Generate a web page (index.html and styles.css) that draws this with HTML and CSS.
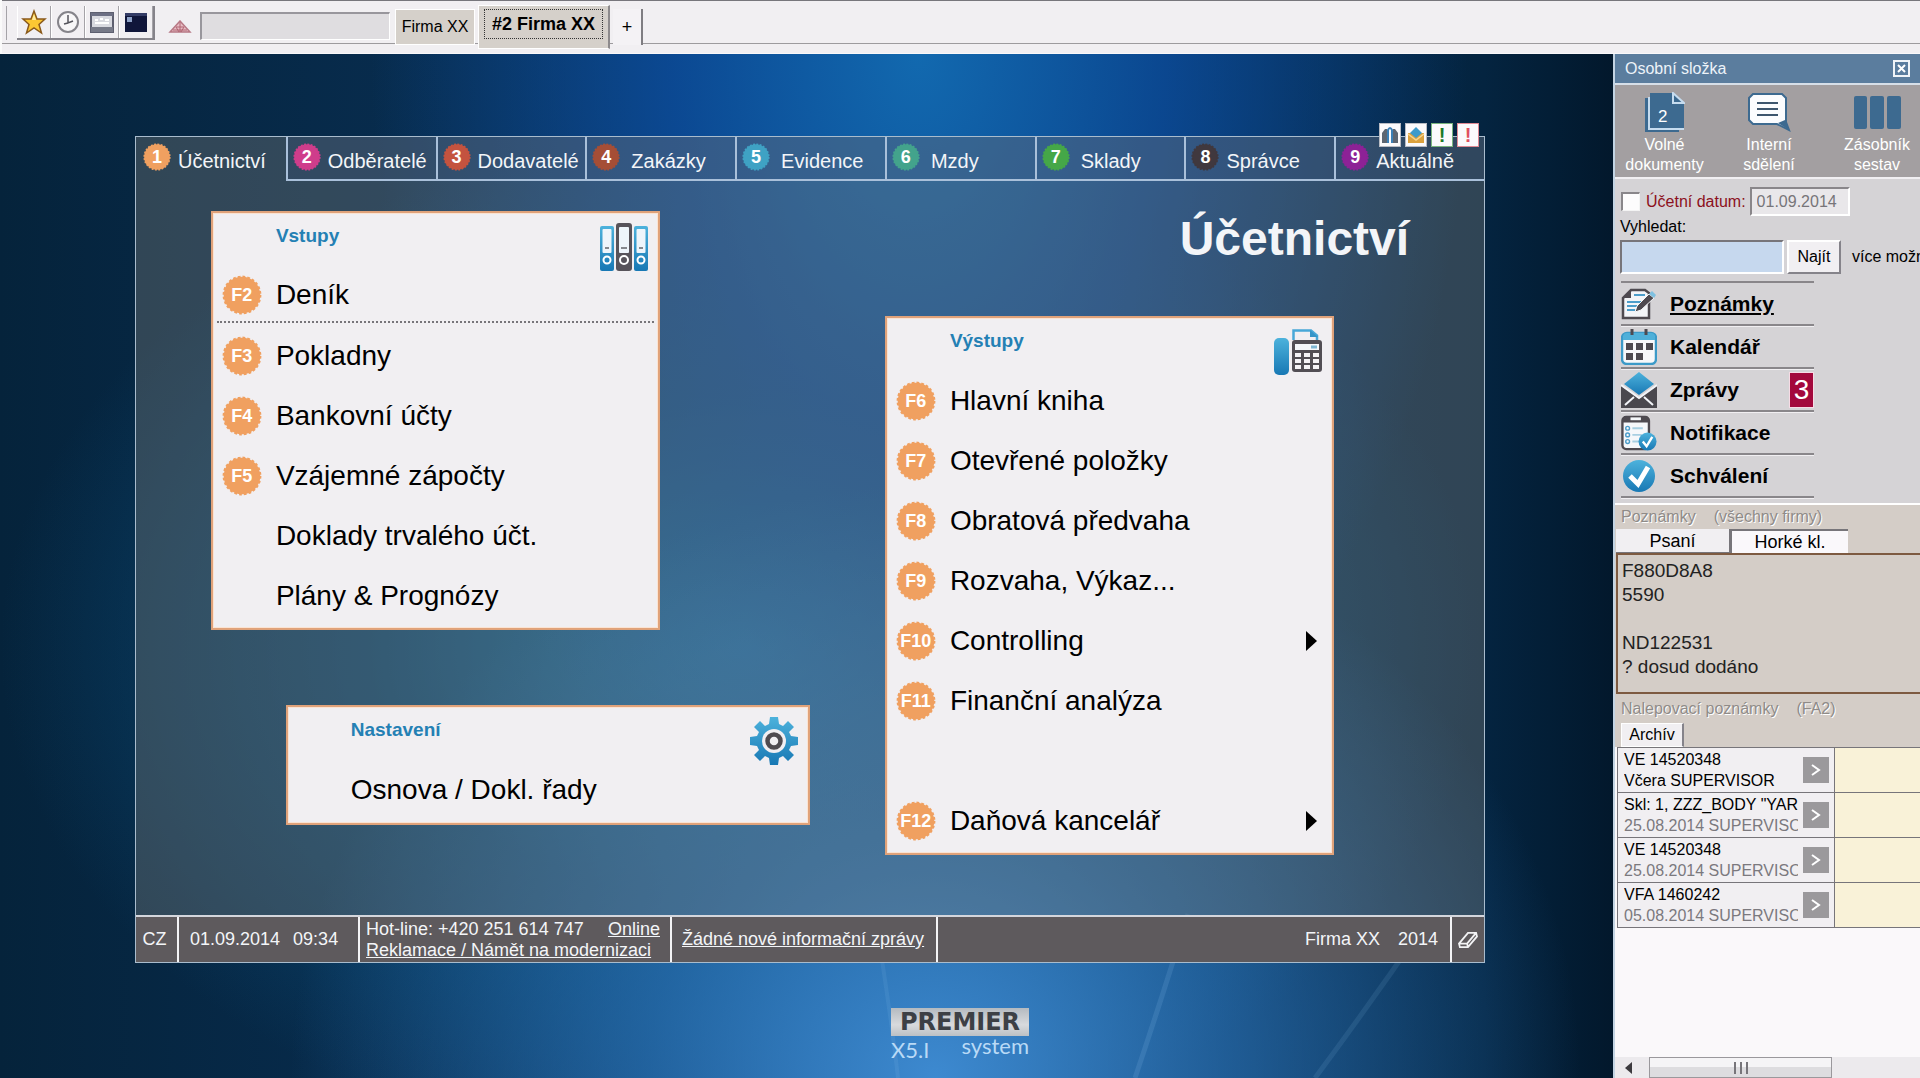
FILE: index.html
```html
<!DOCTYPE html>
<html lang="cs">
<head>
<meta charset="utf-8">
<title>PREMIER system – Účetnictví</title>
<link rel="stylesheet" href="styles.css">
</head>
<body>
<svg class="defs" aria-hidden="true">
  <defs>
    <linearGradient id="blue" x1="0" y1="0" x2="0" y2="1"><stop offset="0" stop-color="#4db2dc"/><stop offset="1" stop-color="#1878b4"/></linearGradient>
    <symbol id="seal" viewBox="0 0 40 40"><circle cx="20" cy="20" r="18.300" fill="currentColor"/><circle cx="20" cy="20" r="18" fill="none" stroke="currentColor" stroke-width="2.800" stroke-dasharray="2.700 2.012"/></symbol>
  </defs>
</svg>

<header class="toolbar">
  <div class="tools">
    <button class="tool" aria-label="Oblíbené"><svg width="26" height="26" viewBox="0 0 26 26"><path d="M13 2l3 8h8l-6 5.500 2.500 8.500-7.500-5-7.500 5 2.500-8.500-6-5.500h8z" fill="#fbc733" stroke="#8a5a1c" stroke-width="1.500"/><path d="M13 5l2 6h-4z" fill="#ffeaa0"/></svg></button>
    <button class="tool" aria-label="Historie"><svg width="24" height="24" viewBox="0 0 24 24"><circle cx="12" cy="12" r="10" fill="#f8f7f8" stroke="#85848a" stroke-width="2"/><path d="M12 5v8l5-2M12 13l-4 1" fill="none" stroke="#55555c" stroke-width="1.500"/></svg></button>
    <button class="tool" aria-label="Okno"><svg width="24" height="24" viewBox="0 0 24 24"><rect x="1" y="3" width="22" height="19" fill="#d9dae0" stroke="#5e6070" stroke-width="2"/><rect x="1" y="3" width="22" height="3" fill="#6d7084"/><path d="M5 10h3M10 9h3M15 10h4M5 13h14" stroke="#fff" stroke-width="2"/><rect x="1" y="17" width="22" height="5" fill="#777a88"/></svg></button>
    <button class="tool" aria-label="Terminál"><svg width="24" height="24" viewBox="0 0 24 24"><rect x="1" y="3" width="22" height="19" fill="#10163a"/><path d="M1 3h22v3H1z" fill="#343c66"/><rect x="3" y="7" width="5" height="5" fill="#8ea2c8"/></svg></button>
  </div>
  <svg class="pyramid" width="24" height="14" viewBox="0 0 24 14"><path d="M12 1l10 11H2z" fill="#e7bcc4" stroke="#b77885" stroke-width="1.500"/><path d="M8 7h8M5 10h14M12 2v10M8 7l3 5M16 7l-3 5" stroke="#b06573" stroke-width="1"/></svg>
  <input class="command" type="text" aria-label="Příkaz">
  <nav class="firms">
    <button class="firm">Firma XX</button>
    <button class="firm firm-active"><span>#2 Firma XX</span></button>
    <button class="firm firm-add">+</button>
  </nav>
</header>

<div class="desk">
<main class="workspace">
  <svg class="rays" viewBox="0 0 1613 1024" preserveAspectRatio="none" aria-hidden="true">
    <g fill="none" stroke="#9fd0f5"><path d="M1135 1024Q1160 950 1188 860" stroke-width="5" opacity=".14"/><path d="M1315 1024Q1370 950 1425 870" stroke-width="5" opacity=".11"/><path d="M898 1024Q892 970 878 880" stroke-width="4" opacity=".1"/></g>
  </svg>

  <section class="frame">
    <div class="alerts">
      <button class="alert" aria-label="Hledat"><svg width="18" height="18" viewBox="0 0 18 18"><path d="M1 17V7l3-4h2v14zM17 17V7l-3-4h-2v14z" fill="#5d6672"/><path d="M7 17V4q2-4 4 0v13" fill="none" stroke="#3b7fb6" stroke-width="2"/></svg></button>
      <button class="alert" aria-label="Pošta"><svg width="18" height="18" viewBox="0 0 18 18"><path d="M1 7h16v10H1z" fill="#dba13d"/><path d="M9 1l6 6-6 5-6-5z" fill="#3d9aca"/><path d="M1 8l8 6 8-6" fill="none" stroke="#f6d48f" stroke-width="1.500"/></svg></button>
      <button class="alert alert-green">!</button>
      <button class="alert alert-red">!</button>
    </div>
    <nav class="modules">
      <a href="#" class="module current"><span class="num n1"><svg><use href="#seal"/></svg><b>1</b></span><span class="name">Účetnictví</span></a>
      <a href="#" class="module"><span class="num n2"><svg><use href="#seal"/></svg><b>2</b></span><span class="name">Odběratelé</span></a>
      <a href="#" class="module"><span class="num n3"><svg><use href="#seal"/></svg><b>3</b></span><span class="name">Dodavatelé</span></a>
      <a href="#" class="module wide"><span class="num n4"><svg><use href="#seal"/></svg><b>4</b></span><span class="name">Zakázky</span></a>
      <a href="#" class="module wide"><span class="num n5"><svg><use href="#seal"/></svg><b>5</b></span><span class="name">Evidence</span></a>
      <a href="#" class="module wide"><span class="num n6"><svg><use href="#seal"/></svg><b>6</b></span><span class="name">Mzdy</span></a>
      <a href="#" class="module wide"><span class="num n7"><svg><use href="#seal"/></svg><b>7</b></span><span class="name">Sklady</span></a>
      <a href="#" class="module"><span class="num n8"><svg><use href="#seal"/></svg><b>8</b></span><span class="name">Správce</span></a>
      <a href="#" class="module"><span class="num n9"><svg><use href="#seal"/></svg><b>9</b></span><span class="name">Aktuálně</span></a>
    </nav>

    <div class="board">
      <h1 class="title">Účetnictví</h1>

      <section class="card inputs">
        <header class="card-head"><h2>Vstupy</h2>
          <svg width="48" height="48" viewBox="0 0 48 48"><g fill="url(#blue)"><rect x="0" y="3" width="14" height="45" rx="2"/><rect x="34" y="3" width="14" height="45" rx="2"/></g><rect x="16" y="0" width="16" height="48" rx="3" fill="#57535a"/><g fill="#eef5fb"><rect x="2.500" y="6" width="9" height="24" rx="1"/><rect x="36.500" y="6" width="9" height="24" rx="1"/><rect x="19" y="4" width="10" height="26" rx="1"/></g><path d="M5 25h4M39 25h4M21 25h6" stroke="#85888e" stroke-width="2"/><g fill="none" stroke="#fff" stroke-width="2"><circle cx="7" cy="37" r="3.500"/><circle cx="41" cy="37" r="3.500"/><circle cx="24" cy="37" r="4"/></g></svg>
        </header>
        <ul class="menu">
          <li class="ruled"><a href="#"><span class="key"><svg><use href="#seal"/></svg><b>F2</b></span>Deník</a></li>
          <li><a href="#"><span class="key"><svg><use href="#seal"/></svg><b>F3</b></span>Pokladny</a></li>
          <li><a href="#"><span class="key"><svg><use href="#seal"/></svg><b>F4</b></span>Bankovní účty</a></li>
          <li><a href="#"><span class="key"><svg><use href="#seal"/></svg><b>F5</b></span>Vzájemné zápočty</a></li>
          <li><a href="#"><span class="key"></span>Doklady trvalého účt.</a></li>
          <li><a href="#"><span class="key"></span>Plány &amp; Prognózy</a></li>
        </ul>
      </section>

      <section class="card settings">
        <header class="card-head"><h2>Nastavení</h2>
          <svg width="48" height="48" viewBox="-24 -24 48 48"><path fill="url(#blue)" d="M-4-24h8l1 7 4 2 5-5 6 6-5 5 2 4 7 1v8l-7 1-2 4 5 5-6 6-5-5-4 2-1 7h-8l-1-7-4-2-5 5-6-6 5-5-2-4-7-1v-8l7-1 2-4-5-5 6-6 5 5 4-2z"/><circle r="12" fill="#f1eff2"/><circle r="6.500" fill="none" stroke="#4f4b50" stroke-width="4.500"/></svg>
        </header>
        <ul class="menu">
          <li><a href="#"><span class="key"></span>Osnova / Dokl. řady</a></li>
        </ul>
      </section>

      <section class="card outputs">
        <header class="card-head"><h2>Výstupy</h2>
          <svg width="48" height="48" viewBox="0 0 48 48"><rect x="0" y="10" width="15" height="37" rx="5" fill="url(#blue)"/><path d="M19.500 12V2.500H37l6 5V12" fill="none" stroke="#48a8d8" stroke-width="2.500"/><path d="M36 2v7h8z" fill="#3595c8"/><rect x="18" y="12" width="30" height="32" rx="3" fill="#524e54"/><rect x="21" y="16" width="24" height="6" fill="#f5f7fa"/><path d="M37 19h6" stroke="#7fb6d2" stroke-width="3"/><path fill="#f5f3f6" d="M21 25h6v4h-6zM30 25h6v4h-6zM39 25h6v4h-6zM21 31h6v4h-6zM30 31h6v4h-6zM39 31h6v4h-6zM21 37h6v4h-6zM30 37h6v4h-6zM39 37h6v4h-6z"/></svg>
        </header>
        <ul class="menu">
          <li><a href="#"><span class="key"><svg><use href="#seal"/></svg><b>F6</b></span>Hlavní kniha</a></li>
          <li><a href="#"><span class="key"><svg><use href="#seal"/></svg><b>F7</b></span>Otevřené položky</a></li>
          <li><a href="#"><span class="key"><svg><use href="#seal"/></svg><b>F8</b></span>Obratová předvaha</a></li>
          <li><a href="#"><span class="key"><svg><use href="#seal"/></svg><b>F9</b></span>Rozvaha, Výkaz...</a></li>
          <li><a href="#" class="more"><span class="key"><svg><use href="#seal"/></svg><b>F10</b></span>Controlling</a></li>
          <li><a href="#"><span class="key"><svg><use href="#seal"/></svg><b>F11</b></span>Finanční analýza</a></li>
          <li class="apart"><a href="#" class="more"><span class="key"><svg><use href="#seal"/></svg><b>F12</b></span>Daňová kancelář</a></li>
        </ul>
      </section>
    </div>

    <footer class="status">
      <div class="cell lang">CZ</div>
      <div class="cell clock"><span>01.09.2014</span><span>09:34</span></div>
      <div class="cell contact"><div class="line"><span>Hot-line: +420 251 614 747</span><a href="#">Online</a></div><a href="#">Reklamace / Námět na modernizaci</a></div>
      <div class="cell news"><a href="#">Žádné nové informační zprávy</a></div>
      <div class="cell company"><span>Firma XX</span><span>2014</span></div>
      <button class="cell eraser" aria-label="Vymazat"><svg width="22" height="18" viewBox="0 0 24 20"><path d="M2 14L12 2h9l1 4-10 12H3zM2 14h9l10-12M11 14l1 4" fill="none" stroke="#f2f2f4" stroke-width="2"/></svg></button>
    </footer>
  </section>

  <div class="brand">
    <div class="plate">PREMIER</div>
    <div class="brand-row"><span class="version">X5.I</span><span class="system">system</span></div>
  </div>
</main>

<aside class="side">
  <div class="side-title"><span>Osobní složka</span><button class="close" aria-label="Zavřít"><svg width="17" height="17" viewBox="0 0 17 17"><rect x="1" y="1" width="15" height="15" fill="none" stroke="#f0f4f8" stroke-width="2"/><path d="M5 5l7 7M12 5l-7 7" stroke="#fff" stroke-width="2"/></svg></button></div>
  <div class="shortcuts">
    <button class="shortcut"><svg width="40" height="40" viewBox="0 0 40 40"><path d="M0 6h8v32h26v2H0z" fill="#3d6a90"/><path d="M5 1h22l12 11v24H5z" fill="#3d6a90"/><path d="M4 5v32h35" fill="none" stroke="#c6dcef" stroke-width="2"/><path d="M28 1v10h11z" fill="#3d6a90" stroke="#c6dcef" stroke-width="2"/><text x="13" y="30" class="doc-count">2</text></svg>Volné<br>dokumenty</button>
    <button class="shortcut"><svg width="44" height="40" viewBox="0 0 44 40"><path d="M6 2h29l4 4v24l3 8-12-6H6l-4-4V6z" fill="#fbfcfe" stroke="#3d6a90" stroke-width="2"/><path d="M31 31l11 7-4-10z" fill="#3d6a90"/><path d="M10 11h21M10 17h21M10 23h21" stroke="#3d566e" stroke-width="2"/></svg>Interní<br>sdělení</button>
    <button class="shortcut"><svg width="48" height="40" viewBox="0 0 48 40"><g fill="#3d6a90"><rect x="1" y="4" width="13" height="33" rx="2"/><rect x="17" y="4" width="14" height="33" rx="2"/><rect x="34" y="4" width="14" height="33" rx="2"/></g></svg>Zásobník<br>sestav</button>
  </div>

  <form class="search">
    <div class="date-row"><input type="checkbox" id="acc"><label for="acc">Účetní datum:</label><input class="date" type="text" value="01.09.2014" aria-label="Datum"></div>
    <label for="find">Vyhledat:</label>
    <div class="find-row"><input class="find" id="find" type="text"><button type="button" class="find-btn">Najít</button><span>více možností</span></div>
  </form>

  <ul class="folders">
    <li><a href="#"><svg width="36" height="36" viewBox="0 0 36 36"><path d="M10 4h14l4 3v25H2V12z" fill="#f3f5f8" stroke="#4e4a50" stroke-width="2.500"/><path d="M2 12l8-8v8z" fill="#4e4a50"/><path d="M13 9h11M6 16h14M6 20h11M6 24h8" stroke="#4c9dca" stroke-width="2"/><path d="M14 26l2-6 12-12 5 4-13 12z" fill="#4e4a50" stroke="#f3f5f8"/><path d="M28 8l3-3 4 4-2 3z" fill="#7fc0e0"/></svg><u>Poznámky</u></a></li>
    <li><a href="#"><svg width="36" height="36" viewBox="0 0 36 36"><rect x="1" y="4" width="34" height="31" rx="5" fill="#f7f8fa" stroke="#3c9ac8" stroke-width="2.500"/><path d="M2 11V8q0-4 4-4h24q4 0 4 4v3z" fill="#4fb0d9"/><path d="M11 0v6M25 0v6" stroke="#4e4a50" stroke-width="3"/><path d="M5 14h7v7H5zM15 14h7v7h-7zM25 14h7v7h-7zM5 24h7v7H5zM15 24h7v7h-7z" fill="#4e4a50"/></svg>Kalendář</a></li>
    <li><a href="#"><svg width="36" height="36" viewBox="0 0 36 36"><path d="M0 14v22h36V14L18 26z" fill="#4a484e"/><path d="M18 0l15 12-15 11L3 12z" fill="url(#blue)"/><path d="M4 33l9-8M32 33l-9-8M0 13l18 13 18-13" fill="none" stroke="#f2f4f8" stroke-width="2"/></svg>Zprávy</a><span class="count">3</span></li>
    <li><a href="#"><svg width="38" height="38" viewBox="0 0 38 38"><rect x="1.500" y="2" width="28" height="34" rx="4" fill="#f5f7fa" stroke="#4e4a50" stroke-width="2.500"/><path d="M2 8V5q0-4 4-4h19q4 0 4 4v3z" fill="#4e4a50"/><path d="M10 4h11" stroke="#f5f7fa" stroke-width="3"/><path d="M12 14h11M12 21h10M12 28h7" stroke="#a8cfe2" stroke-width="2"/><g fill="none" stroke="#4c9dca" stroke-width="1.500"><circle cx="7" cy="14" r="2"/><circle cx="7" cy="21" r="2"/><circle cx="7" cy="28" r="2"/></g><circle cx="28" cy="28" r="9.500" fill="url(#blue)"/><path d="M23 28l4 5 6-10" fill="none" stroke="#fff" stroke-width="2.500"/></svg>Notifikace</a></li>
    <li><a href="#"><svg width="36" height="36" viewBox="0 0 36 36"><circle cx="18" cy="18" r="16" fill="url(#blue)"/><path d="M9 18l8 8 10-17" fill="none" stroke="#fff" stroke-width="5"/></svg>Schválení</a></li>
  </ul>

  <section class="notes">
    <h3><span>Poznámky</span><span>(všechny firmy)</span></h3>
    <div class="note-tabs"><button class="note-tab">Psaní</button><button class="note-tab pressed">Horké kl.</button></div>
    <div class="note-text">F880D8A8<br>5590<br><br>ND122531<br>? dosud dodáno</div>
  </section>

  <section class="stickers">
    <h3><span>Nalepovací poznámky</span><span>(FA2)</span></h3>
    <button class="archive">Archív</button>
    <table>
      <tr><td><div class="sticker"><p>VE 14520348<br>Včera SUPERVISOR</p><button aria-label="Otevřít"><svg width="10" height="14" viewBox="0 0 10 14"><path d="M1 2l7 5-7 5" fill="none" stroke="#fff" stroke-width="2"/></svg></button></div></td><td class="yellow"></td></tr>
      <tr><td><div class="sticker"><p>Skl: 1, ZZZ_BODY "YAR<br><span>25.08.2014 SUPERVISOR</span></p><button aria-label="Otevřít"><svg width="10" height="14" viewBox="0 0 10 14"><path d="M1 2l7 5-7 5" fill="none" stroke="#fff" stroke-width="2"/></svg></button></div></td><td class="yellow"></td></tr>
      <tr><td><div class="sticker"><p>VE 14520348<br><span>25.08.2014 SUPERVISOR</span></p><button aria-label="Otevřít"><svg width="10" height="14" viewBox="0 0 10 14"><path d="M1 2l7 5-7 5" fill="none" stroke="#fff" stroke-width="2"/></svg></button></div></td><td class="yellow"></td></tr>
      <tr><td><div class="sticker"><p>VFA 1460242<br><span>05.08.2014 SUPERVISOR</span></p><button aria-label="Otevřít"><svg width="10" height="14" viewBox="0 0 10 14"><path d="M1 2l7 5-7 5" fill="none" stroke="#fff" stroke-width="2"/></svg></button></div></td><td class="yellow"></td></tr>
    </table>
  </section>
  <div class="scroll"><svg width="8" height="12" viewBox="0 0 8 12"><path d="M7 0v12L0 6z" fill="#3c3a3e"/></svg><div class="thumb"><i></i><i></i><i></i></div></div>
</aside>
</div>
</body>
</html>
```
FILE: styles.css
```css
* { box-sizing: border-box; }
html, body { height: 100%; }
body { margin: 0; display: flex; flex-direction: column; overflow: hidden; font-family: "Liberation Sans", Arial, sans-serif; font-size: 16px; color: #000; }
button, input { font: inherit; color: inherit; margin: 0; padding: 0; border: 0; border-radius: 0; background: none; }
ul { list-style: none; margin: 0; padding: 0; }
h1, h2, h3, p { margin: 0; font-weight: normal; }
a { color: inherit; text-decoration: none; }
svg { display: block; flex: none; }
.defs { position: absolute; width: 0; height: 0; }

/* top toolbar */
.toolbar { flex: none; height: 54px; display: flex; align-items: flex-start; background: linear-gradient(#77767c 0 1px, #f1eff2 1px 43px, #9d9b9e 43px 44px, #f1eff2 44px); padding-left: 6px; border-left: 2px solid #fafafa; box-shadow: inset 0 -1px 0 #f9f8fa; }
.tools, .pyramid, .command, .firms { flex: none; }
.tools { display: flex; margin: 6px 0 0 9px; border-right: 2px solid #85838a; border-bottom: 2px solid #85838a; box-shadow: -10px 0 0 #f1eff2, -11px 0 0 #a5a3a8; }
.tool { width: 34px; height: 32px; display: grid; place-items: center; border-right: 1px solid #a5a3a8; border-left: 1px solid #fff; }
.pyramid { margin: 20px 0 0 13px; }
.command { width: 190px; height: 28px; margin: 12px 0 0 8px; background: #dfdde0; border: 1px solid #fff; border-top: 2px solid #98969c; border-left: 2px solid #98969c; }
.firms { display: flex; align-items: flex-start; gap: 3px; margin: 5px 0 0 5px; }
.firm { height: 36px; width: 80px; margin-top: 4px; background: #d5d0ca; border: 1px solid #fff; font-size: 16px; }
.firm-active { width: 132px; height: 44px; margin-top: 0; padding: 0 5px 6px; border-right: 2px solid #8d8a8c; font-weight: bold; font-size: 18px; }
.firm-active span { display: block; line-height: 28px; border: 1px dotted #333; }
.firm-add { width: 30px; background: #f4f2f5; border: 0; border-right: 2px solid #7f7d82; font-size: 18px; }

.desk { flex: 1; min-height: 0; display: flex; }

/* workspace */
.workspace { position: relative; flex: 1; min-width: 0; padding: 82px 128px 0 135px;
  background:
    radial-gradient(ellipse 40% 58% at 58% 100%, rgba(64,142,214,.95), rgba(46,120,190,.65) 45%, rgba(20,80,140,0)),
    radial-gradient(ellipse 34% 80% at 57% 0%, rgba(18,105,175,1), rgba(12,80,165,.75) 45%, rgba(10,60,120,0)),
    radial-gradient(ellipse 46% 50% at 46% 58%, rgba(22,120,175,.95), rgba(12,84,130,.65) 50%, rgba(10,50,90,0)),
    linear-gradient(90deg, #05233b, #0a3560 50%, #042440 92%, #02182c); }
.rays { position: absolute; inset: 0; width: 100%; height: 100%; }
.frame { position: relative; border: 1px solid #a9bccd; background: rgba(120,124,122,.38); color: #f3f5f8; }
.modules { display: grid; grid-template-columns: repeat(9, minmax(0, 1fr)); }
.module { height: 44px; display: flex; align-items: center; gap: 7px; padding: 0 0 2px 5px; font-size: 20px; white-space: nowrap; border-left: 2px solid #a9c0da; border-bottom: 2px solid #a9c0da; background: rgba(50,80,130,.2); }
.wide { gap: 11px; }
.name { padding-top: 8px; }
.current { border-color: transparent; background: none; }
.num { display: grid; place-items: center; flex: none; width: 28px; height: 28px; }
.num svg, .num b, .key svg, .key b { grid-area: 1 / 1; width: 100%; height: 100%; }
.num b { color: #fff; font-size: 18px; line-height: 28px; text-align: center; }
.n1 { color: #f0a060; } .n2 { color: #cf3d8b; } .n3 { color: #c4533f; } .n4 { color: #a54e36; } .n5 { color: #3fa2c4; }
.n6 { color: #43a38c; } .n7 { color: #45a748; } .n8 { color: #40383e; } .n9 { color: #8d2296; }
.alerts { position: absolute; right: 5px; top: -14px; display: flex; gap: 4px; }
.alert { width: 22px; height: 24px; display: grid; place-items: center; background: #fbfafc; border: 1px solid #b9bcc4; font-weight: bold; font-size: 20px; line-height: 20px; }
.alert-green { color: #1b7a28; border-color: #7ab57f; }
.alert-red { color: #e05060; border-color: #e08a94; }

.board { display: grid; grid-template-columns: repeat(18, minmax(0, 1fr)); grid-template-rows: 30px 105px minmax(314px, auto) 75px minmax(120px, auto) 30px 60px; }
.title { grid-area: 1 / 11 / 3 / 18; align-self: start; justify-self: end; margin-top: 30px; font-size: 48px; line-height: 56px; font-weight: bold; }
.card { color: #000; background: #f1eff2; border: 2px solid #e0a27a; box-shadow: inset 0 0 0 1px #fbe3d2; }
.inputs { grid-area: 2 / 2 / 4 / 8; }
.settings { grid-area: 5 / 3 / 6 / 10; }
.outputs { grid-area: 3 / 11 / 7 / 17; }
.card-head { display: flex; justify-content: space-between; align-items: flex-start; height: 52px; padding: 0 10px 0 63px; }
.card-head h2 { font-size: 19px; line-height: 46px; font-weight: bold; color: #2480b4; }
.card-head svg { margin-top: 10px; }
.menu a { display: flex; align-items: center; height: 60px; padding: 1px 0 0 9px; font-size: 28px; gap: 14px; white-space: nowrap; }
.key { display: grid; place-items: center; width: 40px; height: 40px; color: #f0a060; }
.key b { color: #fff; font-size: 18px; line-height: 40px; text-align: center; }
.ruled { margin: 0 4px 2px; border-bottom: 2px dotted #77757a; }
.ruled a { height: 56px; margin-left: -4px; padding-top: 4px; }
.apart { margin-top: 60px; }
.more::after { content: ""; margin: 0 15px 0 auto; border-left: 11px solid #000; border-top: 10px solid transparent; border-bottom: 10px solid transparent; }

.status { display: flex; height: 47px; background: #5e5a5d; border-top: 2px solid #d4d6dc; font-size: 18px; }
.cell { display: flex; align-items: center; border-right: 2px solid #f4f4f6; white-space: nowrap; }
.lang { width: 43px; justify-content: center; padding-right: 4px; }
.clock { width: 181px; padding-left: 11px; gap: 13px; }
.contact { width: 312px; flex-direction: column; align-items: flex-start; justify-content: center; padding-left: 6px; line-height: 21px; }
.line { display: flex; justify-content: space-between; width: 294px; }
.status a { text-decoration: underline; }
.news { width: 266px; padding-left: 10px; }
.company { flex: 1; justify-content: flex-end; gap: 18px; padding-right: 12px; }
.eraser { width: 32px; justify-content: center; border-right: 0; }

.brand { position: relative; width: 138px; margin: 45px 0 0 56%; }
.plate { height: 28px; text-align: center; background: linear-gradient(#b4bac0, #d8dadd 60%, #bcc0c4); color: #3d4045; font: bold 24px/28px "DejaVu Sans", sans-serif; }
.brand-row { display: flex; justify-content: space-between; font-family: Lato, sans-serif; font-size: 22px; line-height: 20px; color: #b9daf6; }
.version { font-size: 22px; line-height: 28px; }

/* side panel */
.side { flex: none; width: 307px; overflow: hidden; display: flex; flex-direction: column; background: #d5d3d6; border-left: 2px solid #c3d4e3; }
.side > * { flex: none; }
.side-title { display: flex; justify-content: space-between; align-items: center; height: 31px; padding: 0 10px; background: #5b7d9e; color: #edf3f9; border-bottom: 2px solid #d7dfe8; }
.shortcuts { display: grid; grid-template-columns: 99px 110px 106px; height: 94px; background: #a39fa1; border-bottom: 2px solid #f1eff2; color: #fff; }
.shortcut { display: flex; flex-direction: column; align-items: center; padding-top: 7px; line-height: 20px; }
.shortcut svg { margin-bottom: 3px; }
.doc-count { font-size: 17px; fill: #fff; }
.search { padding: 7px 0 0 5px; white-space: nowrap; line-height: 20px; }
.date-row, .find-row { display: flex; align-items: center; }
.date-row { color: #8c1020; height: 31px; }
.date-row input[type=checkbox] { appearance: none; width: 19px; height: 19px; background: #fdfcfd; border: 1px solid #f4f4f4; border-top: 2px solid #89868a; border-left: 2px solid #89868a; margin: 0 6px 0 1px; }
.date { width: 100px; height: 29px; margin-left: 4px; padding-left: 5px; color: #777579; background: #e9e7ea; border: 2px solid #fff; border-top-color: #89868a; border-left-color: #89868a; }
.find-row { padding-top: 3px; }
.find-row > * { flex: none; }
.find { width: 164px; height: 34px; background: #c6d8ee; border: 2px solid #fff; border-top-color: #77757a; border-left-color: #77757a; }
.find-btn { width: 54px; height: 34px; margin: 0 11px 0 3px; background: #f1eff2; border: 2px solid #fff; border-right-color: #85838a; border-bottom-color: #85838a; }
.folders { width: 193px; margin: 7px 0 5px 6px; border-top: 2px solid #89868a; }
.folders li { position: relative; display: flex; align-items: center; height: 43px; border-bottom: 2px solid #89868a; box-shadow: 0 1px 0 #f1eff2; }
.folders a { display: flex; align-items: center; font-size: 21px; font-weight: bold; }
.folders svg { margin-right: 13px; width: 36px; height: 36px; }
.count { position: absolute; right: 0; top: 3px; width: 25px; height: 36px; background: #a3083c; color: #fff; border: 1px solid #f7dbe5; font-size: 28px; line-height: 34px; text-align: center; }
.notes { background: #d4cdc7; border-top: 2px solid #fff; }
.notes h3, .stickers h3 { font-size: 16px; line-height: 24px; padding-left: 6px; color: #8f8b88; text-shadow: 1px 1px 0 #fff; display: flex; gap: 18px; }
.note-tabs { display: flex; padding-left: 1px; }
.note-tab { width: 116px; height: 24px; font-size: 18px; line-height: 20px; background: #f1eff2; border-right: 3px solid #77757a; border-bottom: 1px solid #77757a; }
.note-tabs .pressed { border: 0; border-top: 2px solid #77757a; background: #faf8fb; }
.note-text { margin-left: 1px; height: 141px; padding: 4px; font-size: 19px; line-height: 24px; border: 2px solid #7d5a41; border-right: 0; color: #222; }
.side > .stickers { flex: 1; min-height: 0; background: linear-gradient(#d4cdc7 53px, #faf8fa 53px); }
.notes + .stickers h3 { line-height: 29px; }
.archive { display: block; width: 63px; height: 24px; margin-left: 6px; background: #f1eff2; border: 1px solid #fff; border-right: 2px solid #85838a; }
.stickers table { border-collapse: collapse; margin-left: 2px; table-layout: fixed; width: 340px; }
.stickers td { padding: 0; height: 45px; width: 217px; border: 1px solid #77757a; background: #f1eff2; }
.stickers td.yellow { background: #f9f2d8; width: auto; }
.sticker { display: flex; align-items: center; justify-content: space-between; padding: 0 5px 0 6px; height: 44px; }
.sticker p { width: 176px; overflow: hidden; white-space: nowrap; line-height: 21px; }
.sticker span { display: block; width: 174px; overflow: hidden; color: #7b797e; }
.sticker button { flex: none; display: grid; place-items: center; width: 26px; height: 26px; background: #9b999c; }
.scroll { display: flex; align-items: center; height: 21px; background: #eceaed; padding-left: 10px; }
.thumb { display: flex; justify-content: center; align-items: center; gap: 4px; width: 183px; height: 21px; margin-left: 16px; border: 1px solid #9a989c; background: linear-gradient(#f5f4f6 50%, #dddcdf 50%); }
.thumb i { width: 2px; height: 12px; background: #77757a; }
```
